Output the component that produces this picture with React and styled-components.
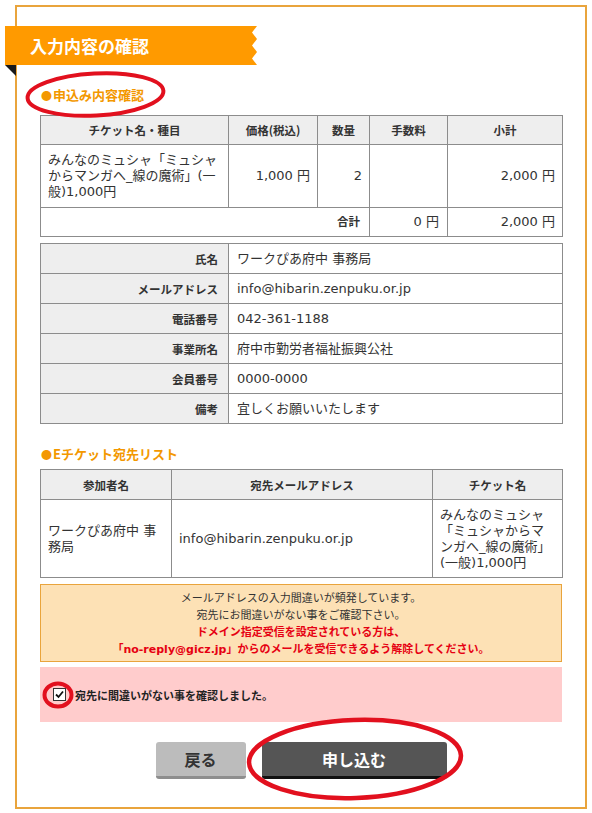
import React from "react";
import styled, { createGlobalStyle } from "styled-components";

const GlobalStyle = createGlobalStyle`
  html, body { margin: 0; padding: 0; background: #fff; }
  body {
    font-family: "DejaVu Sans", "Noto Sans CJK JP", sans-serif;
    color: #333;
  }
`;

const Page = styled.div`
  position: relative;
  width: 592px;
  height: 813px;
  overflow: hidden;
`;

const Frame = styled.div`
  box-sizing: border-box;
  margin: 5px 0 0 15px;
  width: 572px;
  border: 2px solid #e9a43c;
  padding: 0 23px 28px;
`;

const BannerWrap = styled.div`
  position: relative;
  margin: 19px 0 0 -35px;
  width: 252px;
  &::after {
    content: "";
    position: absolute;
    left: 0;
    top: 100%;
    width: 11px;
    height: 11px;
    background: #1a1a1a;
    clip-path: polygon(0 0, 100% 0, 100% 100%);
  }
`;

const Banner = styled.h1`
  margin: 0;
  height: 39px;
  display: flex;
  align-items: center;
  padding-left: 25px;
  background: #ff9a00;
  color: #fff;
  font-family: "Noto Sans CJK JP", sans-serif;
  font-weight: 700;
  font-size: 17px;
  letter-spacing: 0;
  clip-path: polygon(
    0 0, 100% 0, calc(100% - 5px) 6.5px, 100% 13px, calc(100% - 5px) 19.5px,
    100% 26px, calc(100% - 5px) 32.5px, 100% 39px, 0 39px
  );
`;

const Heading = styled.h2`
  margin: ${(p) => p.$top}px 0 ${(p) => p.$bottom}px;
  line-height: 20px;
  font-size: 13px;
  font-weight: 700;
  color: #f39800;
  font-family: "Noto Sans CJK JP", sans-serif;
  display: flex;
  align-items: center;
`;

const Dot = styled.span`
  font-family: "Noto Sans CJK JP", sans-serif;
  font-size: 11px;
  line-height: 20px;
  margin: 0 1px 0 1px;
  color: #f39800;
`;

const Table = styled.table`
  width: 522px;
  border-collapse: collapse;
  table-layout: fixed;
  margin-top: ${(p) => p.$top || 0}px;
  font-size: 13px;
  line-height: 16px;
  color: #333;
  td, th {
    border: 1px solid #8c8c8c;
  }
`;

const Th = styled.th`
  background: #eeeeee;
  font-family: "Noto Sans CJK JP", sans-serif;
  font-weight: 700;
  font-size: 11.5px;
  text-align: ${(p) => p.$align || "center"};
  padding: ${(p) => p.$pad || "6px 7px"};
  line-height: 16px;
  color: #333;
`;

const Td = styled.td`
  text-align: ${(p) => p.$align || "left"};
  padding: ${(p) => p.$pad || "7px 7px"};
  vertical-align: middle;
  font-weight: ${(p) => (p.$bold ? 700 : 400)};
  font-size: ${(p) => (p.$bold ? "11.5px" : "13px")};
  word-break: normal;
  overflow-wrap: anywhere;
`;

const Notice = styled.div`
  margin-top: 6px;
  border: 1px solid #e9a43c;
  background: #fde1b5;
  padding: 5px 0 3px;
  text-align: center;
  font-size: 11px;
  line-height: 17px;
  color: #333;
  font-family: "DejaVu Sans", "Noto Sans CJK JP", sans-serif;
`;

const NoticeLine = styled.div`
  color: ${(p) => (p.$warn ? "#e60012" : "#333")};
  font-weight: ${(p) => (p.$warn ? 700 : 400)};
`;

const CheckArea = styled.label`
  margin-top: 5px;
  height: 55px;
  background: #ffcccc;
  display: flex;
  align-items: center;
  padding-left: 13px;
  gap: 9px;
  font-size: 11px;
  font-weight: 700;
  color: #222;
  font-family: "Noto Sans CJK JP", sans-serif;
`;

const CheckBox = styled.span`
  box-sizing: border-box;
  width: 13px;
  height: 13px;
  border: 1px solid #333;
  background: #fff;
  display: flex;
  align-items: center;
  justify-content: center;
`;

const Buttons = styled.div`
  margin-top: 20px;
  display: flex;
  justify-content: center;
  gap: 16px;
`;

const Button = styled.button`
  box-sizing: border-box;
  width: ${(p) => p.$w}px;
  height: 37px;
  border: none;
  border-bottom: 3px solid ${(p) => (p.$primary ? "#111" : "#8e8e8e")};
  border-radius: 3px;
  background: ${(p) => (p.$primary ? "#555555" : "#bcbcbc")};
  color: ${(p) => (p.$primary ? "#fff" : "#333")};
  font-family: "Noto Sans CJK JP", sans-serif;
  font-size: 16px;
  font-weight: 700;
  padding: 0;
  cursor: pointer;
`;

const Annotations = styled.svg`
  position: absolute;
  left: 0;
  top: 0;
  pointer-events: none;
`;

export default function App() {
  return (
    <Page>
      <GlobalStyle />
      <Frame>
        <BannerWrap>
          <Banner>入力内容の確認</Banner>
        </BannerWrap>

        <Heading $top={20} $bottom={10}>
          <Dot>●</Dot>申込み内容確認
        </Heading>

        <Table>
          <colgroup>
            <col style={{ width: 188 }} />
            <col style={{ width: 89 }} />
            <col style={{ width: 52 }} />
            <col style={{ width: 78 }} />
            <col style={{ width: 115 }} />
          </colgroup>
          <thead>
            <tr>
              <Th>チケット名・種目</Th>
              <Th>価格(税込)</Th>
              <Th>数量</Th>
              <Th>手数料</Th>
              <Th>小計</Th>
            </tr>
          </thead>
          <tbody>
            <tr>
              <Td>
                みんなのミュシャ「ミュシャからマンガへ_線の魔術」(一
                <br />
                般)1,000円
              </Td>
              <Td $align="right">1,000 円</Td>
              <Td $align="right">2</Td>
              <Td></Td>
              <Td $align="right">2,000 円</Td>
            </tr>
            <tr>
              <Td colSpan={3} $align="right" $bold $pad="6px 9px">
                合計
              </Td>
              <Td $align="right" $pad="6px 8px">0 円</Td>
              <Td $align="right" $pad="6px 7px">2,000 円</Td>
            </tr>
          </tbody>
        </Table>

        <Table $top={6}>
          <colgroup>
            <col style={{ width: 188 }} />
            <col style={{ width: 334 }} />
          </colgroup>
          <tbody>
            {[
              ["氏名", "ワークぴあ府中 事務局"],
              ["メールアドレス", "info@hibarin.zenpuku.or.jp"],
              ["電話番号", "042-361-1188"],
              ["事業所名", "府中市勤労者福祉振興公社"],
              ["会員番号", "0000-0000"],
              ["備考", "宜しくお願いいたします"],
            ].map(([k, v]) => (
              <tr key={k}>
                <Th $align="right" $pad="7px 10px 6px">
                  {k}
                </Th>
                <Td $pad="7px 8px 6px">{v}</Td>
              </tr>
            ))}
          </tbody>
        </Table>

        <Heading $top={20} $bottom={5}>
          <Dot>●</Dot>Eチケット宛先リスト
        </Heading>

        <Table>
          <colgroup>
            <col style={{ width: 131 }} />
            <col style={{ width: 261 }} />
            <col style={{ width: 130 }} />
          </colgroup>
          <thead>
            <tr>
              <Th $pad="7px 7px 6px">参加者名</Th>
              <Th $pad="7px 7px 6px">宛先メールアドレス</Th>
              <Th $pad="7px 7px 6px">チケット名</Th>
            </tr>
          </thead>
          <tbody>
            <tr>
              <Td $pad="7px 7px 6px">ワークぴあ府中 事務局</Td>
              <Td $pad="7px 7px 6px">info@hibarin.zenpuku.or.jp</Td>
              <Td $pad="7px 7px 6px">
                みんなのミュシャ
                <br />
                「ミュシャからマ
                <br />
                ンガへ_線の魔術」
                <br />
                (一般)1,000円
              </Td>
            </tr>
          </tbody>
        </Table>

        <Notice>
          <NoticeLine>メールアドレスの入力間違いが頻発しています。</NoticeLine>
          <NoticeLine>宛先にお間違いがない事をご確認下さい。</NoticeLine>
          <NoticeLine $warn>ドメイン指定受信を設定されている方は、</NoticeLine>
          <NoticeLine $warn>
            「no-reply@gicz.jp」からのメールを受信できるよう解除してください。
          </NoticeLine>
        </Notice>

        <CheckArea>
          <CheckBox>
            <svg width="9" height="9" viewBox="0 0 9 9">
              <path d="M1 4.5 L3.5 7 L8 1.5" fill="none" stroke="#111" strokeWidth="1.8" />
            </svg>
          </CheckBox>
          宛先に間違いがない事を確認しました。
        </CheckArea>

        <Buttons>
          <Button $w={90}>戻る</Button>
          <Button $w={185} $primary>
            申し込む
          </Button>
        </Buttons>
      </Frame>

      <Annotations width="592" height="813" viewBox="0 0 592 813">
        <ellipse cx="95.5" cy="94.5" rx="68" ry="21" fill="none" stroke="#e2101e" strokeWidth="4" transform="rotate(-3 95.5 94.5)" />
        <ellipse cx="58" cy="695" rx="13.5" ry="11.5" fill="none" stroke="#e2101e" strokeWidth="4" />
        <ellipse cx="355" cy="759" rx="106" ry="39" fill="none" stroke="#e2101e" strokeWidth="4.5" transform="rotate(-2 355 759)" />
      </Annotations>
    </Page>
  );
}
